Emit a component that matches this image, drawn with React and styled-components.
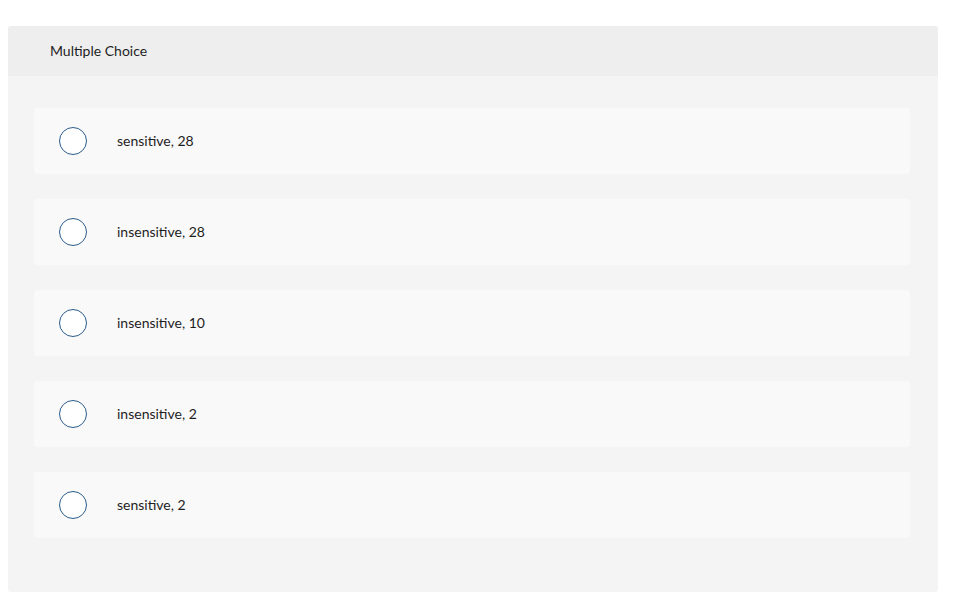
import React, { useState } from 'react'
import styled, { createGlobalStyle } from 'styled-components'

const options = [
    'sensitive, 28',
    'insensitive, 28',
    'insensitive, 10',
    'insensitive, 2',
    'sensitive, 2',
]

const App = () => {
    const [selected, setSelected] = useState(null)

    return (
        <>
            <GlobalStyle />
            <Pagina>
                <Cartao>
                    <Cabecalho>Multiple Choice</Cabecalho>
                    <Corpo>
                        {options.map((texto, i) => (
                            <Opcao key={i} onClick={() => setSelected(i)}>
                                <Radio marcado={selected === i} />
                                <Rotulo>{texto}</Rotulo>
                            </Opcao>
                        ))}
                    </Corpo>
                </Cartao>
            </Pagina>
        </>
    )
}

const GlobalStyle = createGlobalStyle`
    body {
        margin: 0;
        background: #ffffff;
        font-family: "Lato", "Open Sans", sans-serif;
        color: #1e1e1e;
    }
`

const Pagina = styled.div`
    padding: 26px 32px 0 8px;
`

const Cartao = styled.div`
    width: 930px;
    height: 566px;
    background: #f4f4f4;
    border-radius: 3px;
    overflow: hidden;
`

const Cabecalho = styled.div`
    height: 50px;
    background: #eeeeee;
    display: flex;
    align-items: center;
    padding: 0 0 2px 42px;
    box-sizing: border-box;
    font-size: 14px;
`

const Corpo = styled.div`
    display: flex;
    flex-direction: column;
    gap: 25px;
    padding: 32px 28px 0 26px;
`

const Opcao = styled.div`
    height: 66px;
    background: #f9f9f9;
    border-radius: 3px;
    display: flex;
    align-items: center;
    padding-left: 25px;
    cursor: pointer;
`

const Radio = styled.span`
    width: 26px;
    height: 26px;
    border-radius: 50%;
    border: 1.5px solid #2b5b8c;
    background: ${props => props.marcado ? '#2b5b8c' : '#ffffff'};
    box-shadow: ${props => props.marcado ? 'inset 0 0 0 5px #ffffff' : 'none'};
    flex-shrink: 0;
`

const Rotulo = styled.span`
    margin-left: 30px;
    padding-bottom: 2px;
    font-size: 14px;
`

export default App
